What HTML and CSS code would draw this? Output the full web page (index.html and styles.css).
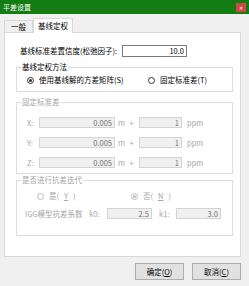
FILE: index.html
```html
<!DOCTYPE html>
<html lang="zh">
<head>
<meta charset="utf-8">
<title>平差设置</title>
<link rel="stylesheet" href="styles.css">
</head>
<body>
<div class="window">
  <div class="titlebar">
    <span class="title">平差设置</span>
    <span class="close">✕</span>
  </div>
  <div class="tabs">
    <div class="tab">一般</div>
    <div class="tab active">基线定权</div>
  </div>
  <div class="panel">
    <div class="conf-row">
      <span class="conf-label">基线标准差置信度(松弛因子):</span>
      <span class="input conf-input">10.0</span>
    </div>

    <fieldset class="group g1">
      <legend>基线定权方法</legend>
      <div class="radio-row r1">
        <span class="radio-item w1"><span class="radio checked"></span>使用基线解的方差矩阵(S)</span>
        <span class="radio-item"><span class="radio"></span>固定标准差(T)</span>
      </div>
    </fieldset>

    <fieldset class="group g2 disabled">
      <legend>固定标准差</legend>
      <div class="xyz-row"><span class="axis">X:</span><span class="input in-a">0.005</span><span class="unit">m</span><span class="plus">+</span><span class="input in-b">1</span><span class="ppm">ppm</span></div>
      <div class="xyz-row"><span class="axis">Y:</span><span class="input in-a">0.005</span><span class="unit">m</span><span class="plus">+</span><span class="input in-b">1</span><span class="ppm">ppm</span></div>
      <div class="xyz-row"><span class="axis">Z:</span><span class="input in-a">0.005</span><span class="unit">m</span><span class="plus">+</span><span class="input in-b">1</span><span class="ppm">ppm</span></div>
    </fieldset>

    <fieldset class="group g3 disabled">
      <legend>是否进行抗差迭代</legend>
      <div class="radio-row r3">
        <span class="radio-item w3"><span class="radio"></span>是(<u>Y</u>)</span>
        <span class="radio-item"><span class="radio checked"></span>否(<u>N</u>)</span>
      </div>
      <div class="igg-row">
        <span class="igg-label">IGG模型抗差系数</span>
        <span class="k">k0:</span>
        <span class="input in-k">2.5</span>
        <span class="k k1">k1:</span>
        <span class="input in-k">3.0</span>
      </div>
    </fieldset>
  </div>
  <div class="buttons">
    <span class="btn">确定(<u>O</u>)</span>
    <span class="btn">取消(<u>C</u>)</span>
  </div>
</div>
</body>
</html>
```

FILE: styles.css
```css
* { box-sizing: border-box; }

body {
  margin: 0;
  width: 249px;
  height: 286px;
  overflow: hidden;
  background: #f0f0f0;
  font-family: "Noto Sans CJK SC", "Noto Sans", sans-serif;
  font-size: 7.5px;
  color: #000;
}

.window {
  width: 249px;
  height: 286px;
}

.titlebar {
  height: 14px;
  background: #137c13;
  color: #fff;
  display: flex;
  align-items: center;
  justify-content: space-between;
  padding: 0 3px 0 3px;
}

.title {
  font-size: 7px;
  line-height: 10px;
}

.close {
  width: 10px;
  height: 9px;
  background: #d04848;
  color: #fff;
  font-size: 5px;
  line-height: 9px;
  text-align: center;
}

.tabs {
  display: flex;
  align-items: flex-end;
  height: 18px;
  padding-left: 4px;
}

.tab {
  width: 29px;
  height: 12px;
  border: 1px solid #d9d9d9;
  border-bottom: none;
  background: #f0f0f0;
  text-align: center;
  line-height: 11px;
}

.tab.active {
  width: 40px;
  height: 15px;
  margin-bottom: -1px;
  background: #fff;
  border-left: 1px solid #d9d9d9;
  position: relative;
  z-index: 1;
  line-height: 13px;
}

.panel {
  margin-left: 4px;
  width: 237px;
  height: 225px;
  background: #fff;
  border: 1px solid #d9d9d9;
  padding: 12px 0 0 11px;
}

.conf-row {
  display: flex;
  align-items: center;
  height: 12px;
}

.conf-label {
  margin-left: 4px;
  width: 102px;
  line-height: 12px;
}

.input {
  height: 12px;
  border: 1px solid #7a7a7a;
  background: #fff;
  text-align: right;
  padding-right: 2px;
  line-height: 10px;
}

.conf-input {
  width: 65px;
}

.group {
  margin: 0;
  width: 217px;
  border: 1px solid #dcdcdc;
  padding: 0;
  min-width: 0;
}

.group legend {
  margin-left: 4px;
  padding: 0 1px;
  line-height: 10px;
}

.g1 {
  margin-top: 5px;
  padding: 3px 0 6px 0;
}

.g2 {
  margin-top: 5px;
  padding: 10px 0 5px 0;
}

.g3 {
  margin-top: 1px;
  padding: 6px 0 16px 0;
}

.disabled {
  color: #a6a6a6;
}

.radio-row {
  display: flex;
  align-items: center;
  height: 10px;
}

.r1 { padding-left: 10px; }
.r3 { padding-left: 20px; }

.radio-item {
  display: flex;
  align-items: center;
  gap: 5px;
  line-height: 10px;
}

.w1 { width: 121px; }
.w3 { width: 94px; }

.radio {
  width: 7px;
  height: 7px;
  border: 1px solid #333;
  border-radius: 50%;
  background: #fff;
  display: flex;
  align-items: center;
  justify-content: center;
}

.radio.checked::after {
  content: "";
  width: 3px;
  height: 3px;
  border-radius: 50%;
  background: #333;
}

.disabled .radio {
  border-color: #bcbcbc;
}

.disabled .radio.checked::after {
  background: #bcbcbc;
}

.xyz-row {
  display: flex;
  align-items: center;
  height: 11px;
  padding-left: 10px;
}

.xyz-row + .xyz-row {
  margin-top: 9px;
}

.disabled .input {
  border-color: #d4d4d4;
  background: #f0f0f0;
  color: #707070;
  height: 11px;
  line-height: 9px;
}

.axis { width: 12px; }
.in-a { width: 76px; }
.unit { margin-left: 3px; width: 6px; }
.plus { width: 15px; text-align: center; }
.in-b { width: 43px; }
.ppm { margin-left: 5px; }

.igg-row {
  display: flex;
  align-items: center;
  height: 11px;
  margin-top: 7px;
  padding-left: 8px;
}

.igg-label { width: 64px; }
.k { width: 18px; }
.k1 { margin-left: 7px; width: 17px; }
.in-k { width: 45px; }

.buttons {
  display: flex;
  padding: 6px 0 0 135px;
  gap: 8px;
}

.btn {
  width: 49px;
  height: 17px;
  border: 1px solid #adadad;
  background: #e1e1e1;
  text-align: center;
  line-height: 15px;
}
```
